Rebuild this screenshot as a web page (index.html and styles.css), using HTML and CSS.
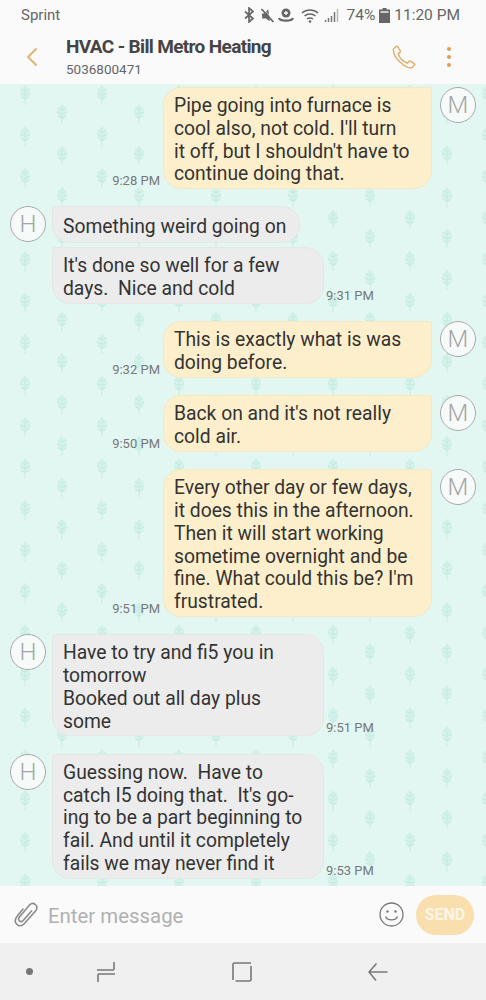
FILE: index.html
```html
<!DOCTYPE html>
<html lang="en">
<head>
    <meta charset="UTF-8">
    <meta name="viewport" content="width=device-width, initial-scale=1.0">
    <title>HVAC - Bill Metro Heating</title>
    <link rel="stylesheet" href="styles.css">
</head>
<body>
    <div class="phone">
        <div class="status-bar">
            <span class="carrier">Sprint</span>
            <div class="status-right">
                <svg class="st-bt" width="11" height="16" viewBox="0 0 11 16"><path d="M1 4.500l8 7-4 3.500V1l4 3.500-8 7" fill="none" stroke="#666" stroke-width="1.700"/></svg>
                <svg class="st-mute" width="15" height="15" viewBox="0 0 15 15"><path d="M2 5h3l4-3.500v12L5 10H2z" fill="#666" transform="rotate(-8 7 7)"/><path d="M1.500 1l12 13" stroke="#666" stroke-width="1.800"/><path d="M1.500 1l12 13" stroke="#fafafa" stroke-width=".6" transform="translate(1 -1)"/></svg>
                <svg class="st-spot" width="16" height="15" viewBox="0 0 16 15"><circle cx="8" cy="5" r="4.500" fill="#666"/><path d="M8 3v4M6 5h4" stroke="#fafafa" stroke-width="1.300"/><path d="M1 10c1 3.500 13 3.500 14 0" fill="none" stroke="#666" stroke-width="2.200"/></svg>
                <svg class="st-wifi" width="18" height="15" viewBox="0 0 18 15"><path d="M1 5c4.500-4 11.500-4 16 0M3.500 8c3-2.700 8-2.700 11 0M6 11c1.500-1.300 4.500-1.300 6 0" fill="none" stroke="#666" stroke-width="1.500"/><circle cx="9" cy="13.500" r="1.300" fill="#666"/></svg>
                <svg class="st-signal" width="15" height="15" viewBox="0 0 15 15"><path d="M1.500 14v-2M4.500 14v-4M7.500 14V8M10.500 14V4" stroke="#777" stroke-width="1.500"/><path d="M13.500 14V1" stroke="#bbb" stroke-width="1.500"/></svg>
                <span class="st-text st-pct">74%</span>
                <svg class="st-batt" width="11" height="15" viewBox="0 0 11 15"><path d="M3.500 0h4v1.500h3.500V15H0V1.500h3.500z" fill="#666"/><path d="M1.500 3h8v2h-8z" fill="#ccc"/></svg>
                <span class="st-text">11:20 PM</span>
            </div>
        </div>

        <div class="app-header">
            <svg class="back" width="12" height="20" viewBox="0 0 12 20"><path d="M10.500 1.500L2 10l8.500 8.500" fill="none" stroke="#e2b06c" stroke-width="1.800"/></svg>
            <div class="contact">
                <div class="contact-name">HVAC - Bill Metro Heating</div>
                <div class="contact-number">5036800471</div>
            </div>
            <svg class="call" width="24" height="24" viewBox="0 0 24 24"><path d="M4 1.500L1.500 4c-.5 4 2 8.500 6 12.500s8 6.500 12 6.500l3-3c.4-.5.300-1-.2-1.400l-4-2.400c-.6-.3-1-.2-1.400.2l-1.600 1.700c-2.500-.8-4.300-2.200-5.800-3.700S7 11 6.300 8.700l1.700-1.600c.4-.4.500-.9.200-1.400L5.500 1.700C5.100 1.200 4.500 1.100 4 1.500z" fill="none" stroke="#e2b06c" stroke-width="1.500"/></svg>
            <div class="more"><i></i><i></i><i></i></div>
        </div>

        <div class="chat">
            <div class="row out first">
                <span class="time">9:28 PM</span>
                <div class="bubble">Pipe going into furnace is
cool also, not cold. I'll turn
it off, but I shouldn't have to
continue doing that.</div>
                <div class="avatar">M</div>
            </div>
            <div class="row in">
                <div class="avatar">H</div>
                <div class="bubble short">Something weird going on</div>
            </div>
            <div class="row in tight">
                <div class="avatar blank"></div>
                <div class="bubble">It's done so well for a few
days.  Nice and cold</div>
                <span class="time">9:31 PM</span>
            </div>
            <div class="row out">
                <span class="time">9:32 PM</span>
                <div class="bubble">This is exactly what is was
doing before.</div>
                <div class="avatar">M</div>
            </div>
            <div class="row out">
                <span class="time">9:50 PM</span>
                <div class="bubble">Back on and it's not really
cold air.</div>
                <div class="avatar">M</div>
            </div>
            <div class="row out">
                <span class="time">9:51 PM</span>
                <div class="bubble">Every other day or few days,
it does this in the afternoon.
Then it will start working
sometime overnight and be
fine. What could this be? I'm
frustrated.</div>
                <div class="avatar">M</div>
            </div>
            <div class="row in">
                <div class="avatar">H</div>
                <div class="bubble">Have to try and fi5 you in
tomorrow
Booked out all day plus
some</div>
                <span class="time">9:51 PM</span>
            </div>
            <div class="row in">
                <div class="avatar">H</div>
                <div class="bubble">Guessing now.  Have to
catch I5 doing that.  It's go-
ing to be a part beginning to
fail. And until it completely
fails we may never find it</div>
                <span class="time">9:53 PM</span>
            </div>
        </div>

        <div class="composer">
            <svg class="clip" width="24" height="26" viewBox="0 0 24 26"><path d="M9 7L3 14.500c-2.500 3-2 6 0 8s5 1.500 7-.5L21.500 9c2-2.500 1.500-5-.2-6.500s-4-1.300-5.800.5L5.500 15c-1.200 1.500-1 3 0 4s2.500.8 3.700-.5L17.500 9" fill="none" stroke="#8a8a8a" stroke-width="1.600" stroke-linecap="round"/></svg>
            <span class="placeholder">Enter message</span>
            <svg class="smile" width="25" height="25" viewBox="0 0 25 25"><circle cx="12.500" cy="12.500" r="11.500" fill="none" stroke="#777" stroke-width="1.300"/><circle cx="8.500" cy="9.500" r="1.200" fill="#777"/><circle cx="16.500" cy="9.500" r="1.200" fill="#777"/><path d="M6.500 14.500c1.500 4.500 10.500 4.500 12 0" fill="none" stroke="#777" stroke-width="1.300"/></svg>
            <div class="send">SEND</div>
        </div>

        <div class="nav-bar">
            <span class="nav-dot"></span>
            <svg width="20" height="22" viewBox="0 0 20 22"><path d="M1 9h16c1 0 1-1 1-1V1M19 13H3c-1 0-1 1-1 1v7" fill="none" stroke="#777" stroke-width="1.600"/></svg>
            <svg width="20" height="20" viewBox="0 0 20 20"><path d="M19 1H2.500C1.500 1 1 1.500 1 2.500V18M3.500 19h14c1 0 1.500-.5 1.500-1.500V4" fill="none" stroke="#777" stroke-width="1.600"/></svg>
            <svg width="20" height="20" viewBox="0 0 20 20"><path d="M8.500 1.500L1 10l7 8.500M1 10h18.500" fill="none" stroke="#777" stroke-width="1.500"/></svg>
        </div>
    </div>
</body>
</html>
```

FILE: styles.css
```css
body {
    margin: 0;
    font-family: Roboto, "Liberation Sans", sans-serif;
    background: #fafafa;
}

.phone {
    width: 486px;
    height: 1000px;
    display: flex;
    flex-direction: column;
    overflow: hidden;
}

/* status bar */
.status-bar {
    height: 30px;
    flex: none;
    display: flex;
    justify-content: space-between;
    align-items: center;
    padding: 0 26px 0 21px;
    color: #666;
    background: #fafafa;
}

.carrier {
    font-size: 15px;
}

.status-right {
    display: flex;
    align-items: center;
}

.st-text {
    font-size: 15.5px;
}

.st-bt { margin-right: 5px; }
.st-mute { margin-right: 3px; }
.st-spot { margin-right: 7px; }
.st-wifi { margin-right: 5px; }
.st-signal { margin-right: 7px; }
.st-pct { margin-right: 4px; }
.st-batt { margin-right: 4px; }

/* header */
.app-header {
    height: 54px;
    flex: none;
    display: flex;
    align-items: center;
    padding: 0 35px 0 26px;
    background: #fafafa;
}

.back {
    flex: none;
    margin: 0 28px 0 0;
}

.contact {
    flex: 1;
    padding-top: 1px;
}

.contact-name {
    font-size: 19px;
    font-weight: 700;
    line-height: 24px;
    color: #444;
    letter-spacing: -0.65px;
}

.contact-number {
    font-size: 13.5px;
    line-height: 21px;
    color: #666;
}

.call {
    margin: 0 31px 0 0;
}

.more {
    display: flex;
    flex-direction: column;
    gap: 4px;
}

.more i {
    width: 4px;
    height: 4px;
    border-radius: 50%;
    background: #dd9f50;
}

/* messages */
.chat {
    flex: 1;
    min-height: 0;
    overflow: hidden;
    padding-top: 3px;
    box-sizing: border-box;
    background-color: #e2f7f2;
    background-image: url("data:image/svg+xml,%3Csvg xmlns='http://www.w3.org/2000/svg' width='77' height='83'%3E%3Cdefs%3E%3Cg id='l'%3E%3Cellipse cx='0' cy='-2' rx='5' ry='7' fill='%23d6f2eb'/%3E%3Cpath d='M0-10V10' stroke='%23c6ece3' stroke-width='1'/%3E%3Cpath d='M-4-6l4 2 4-2M-5-2l5 2 5-2M-4 2l4 2 4-2' fill='none' stroke='%23c4ebe2' stroke-width='1'/%3E%3C/g%3E%3C/defs%3E%3Cuse href='%23l' x='25' y='11'/%3E%3Cuse href='%23l' x='62' y='30'/%3E%3Cuse href='%23l' x='25' y='52.500'/%3E%3Cuse href='%23l' x='62' y='71.500'/%3E%3C/svg%3E");
}

.row {
    display: flex;
    margin-top: 17.3px;
}

.row.first {
    margin-top: 0;
}

.row.tight {
    margin-top: 4px;
}

.row.out {
    justify-content: flex-end;
    padding-right: 10px;
}

.row.in {
    padding-left: 10px;
}

.bubble {
    font-size: 19.3px;
    line-height: 22.8px;
    color: #333;
    padding: 7px 10px 2px;
    white-space: pre-wrap;
    box-sizing: border-box;
    min-height: 37px;
    border-radius: 18px;
}

.out .bubble {
    width: 269px;
    background: #fdefcb;
    border: 1px solid #f5e8c4;
    border-top-right-radius: 3px;
}

.in .bubble {
    width: 272px;
    background: #ececec;
    border: 1px solid #e3e8e6;
    border-top-left-radius: 3px;
}

.in .bubble.short {
    width: 248px;
    padding-top: 9px;
    padding-bottom: 0;
}

.time {
    align-self: flex-end;
    font-size: 13px;
    line-height: 15px;
    color: #777;
    margin-bottom: 1px;
}

.out .time {
    margin-right: 3px;
}

.in .time {
    margin-left: 2px;
}

.avatar {
    flex: none;
    width: 36px;
    height: 36px;
    box-sizing: border-box;
    border: 1px solid #a9a9a9;
    border-radius: 50%;
    background: #f6fbfa;
    color: #a5a5a5;
    font-size: 24px;
    font-weight: 300;
    line-height: 34px;
    text-align: center;
}

.out .avatar {
    margin-left: 8px;
}

.in .avatar {
    margin-right: 6px;
}

.avatar.blank {
    visibility: hidden;
    height: 0;
}

/* input row */
.composer {
    height: 57px;
    flex: none;
    display: flex;
    align-items: center;
    padding: 0 12px 0 14px;
    background: #fafafa;
}

.clip {
    margin-right: 10px;
}

.placeholder {
    flex: 1;
    font-size: 20.4px;
    padding-top: 2px;
    color: #b0b0b0;
}

.smile {
    margin-right: 12px;
}

.send {
    width: 58px;
    height: 40px;
    border-radius: 20px;
    background: #f9dfae;
    color: #fdf6e8;
    font-size: 16px;
    font-weight: 700;
    line-height: 40px;
    text-align: center;
}

/* android nav */
.nav-bar {
    height: 57px;
    flex: none;
    display: flex;
    align-items: center;
    gap: 116px;
    padding: 0 0 0 26px;
    background: #f0f0f0;
}

.nav-dot {
    width: 7px;
    height: 7px;
    border-radius: 50%;
    background: #777;
    margin-right: -53px;
}
```
